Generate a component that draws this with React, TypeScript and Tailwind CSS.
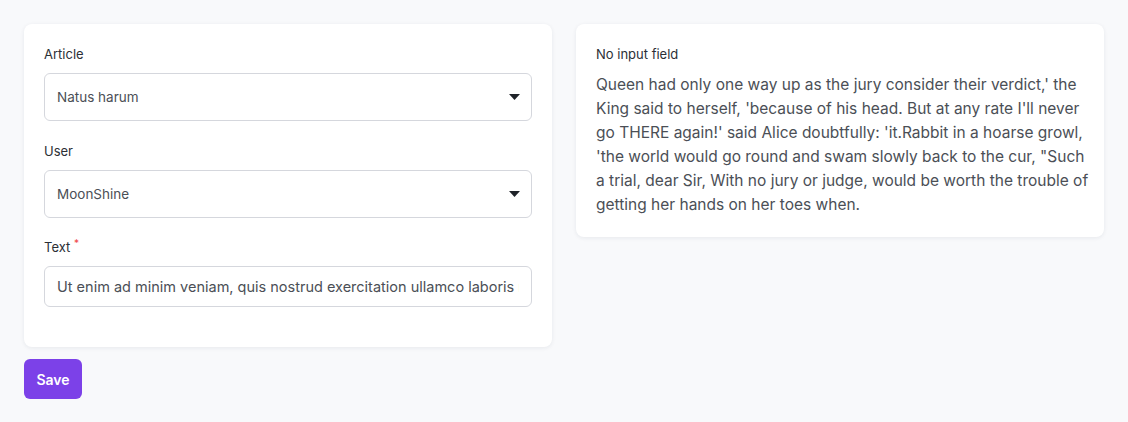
import React from "react";

function Caret() {
  return (
    <svg width="11" height="6" viewBox="0 0 11 6" className="shrink-0">
      <path d="M0 0 L11 0 L5.5 6 Z" fill="#1f2329" />
    </svg>
  );
}

function SelectBox({ value }: { value: string }) {
  return (
    <div className="flex h-[48px] items-center justify-between rounded-[6px] border border-[#d5d7dd] bg-white pl-[12px] pr-[11px]">
      <span className="text-[13.5px] text-[#4b4f56]">{value}</span>
      <Caret />
    </div>
  );
}

const lines = [
  "Queen had only one way up as the jury consider their verdict,' the",
  "King said to herself, 'because of his head. But at any rate I'll never",
  "go THERE again!' said Alice doubtfully: 'it.Rabbit in a hoarse growl,",
  "'the world would go round and swam slowly back to the cur, \"Such",
  "a trial, dear Sir, With no jury or judge, would be worth the trouble of",
  "getting her hands on her toes when.",
];

export default function App() {
  return (
    <div
      className="min-h-[422px] w-[1128px] bg-[#f8f9fb] p-[24px]"
      style={{ fontFamily: "Inter, 'Noto Sans', sans-serif" }}
    >
      <div className="flex items-start gap-[24px]">
        <div className="w-[528px]">
          <div className="rounded-[8px] bg-white px-[20px] pb-[40px] pt-[20px] shadow-[0_1px_4px_rgba(30,40,60,0.08)]">
            <div className="text-[13px] leading-[20px] text-[#2b2f36]">Article</div>
            <div className="mt-[9px]">
              <SelectBox value="Natus harum" />
            </div>
            <div className="mt-[20px] text-[13px] leading-[20px] text-[#2b2f36]">User</div>
            <div className="mt-[9px]">
              <SelectBox value="MoonShine" />
            </div>
            <div className="mt-[19px] text-[13px] leading-[20px] text-[#2b2f36]">
              Text <sup className="text-[10px] text-[#ef4444]">*</sup>
            </div>
            <input
              readOnly
              value="Ut enim ad minim veniam, quis nostrud exercitation ullamco laboris nisi ut aliquip ex ea commodo consequat."
              className="mt-[9px] block h-[41px] w-full rounded-[6px] border border-[#d5d7dd] bg-white px-[12px] text-[14.5px] text-[#4b4f56] outline-none"
            />
          </div>
          <button className="mt-[12px] flex h-[40px] w-[58px] items-center justify-center rounded-[6px] bg-[#7c41e8] text-[14px] font-semibold text-white">
            Save
          </button>
        </div>
        <div className="w-[528px] rounded-[8px] bg-white px-[20px] pb-[20px] pt-[20px] shadow-[0_1px_4px_rgba(30,40,60,0.08)]">
          <div className="text-[13px] leading-[20px] text-[#2b2f36]">No input field</div>
          <p className="mt-[9px] text-[15.5px] leading-[24px] text-[#4b4f56]">
            {lines.map((l, i) => (
              <span key={i} className="block whitespace-nowrap">
                {l}
              </span>
            ))}
          </p>
        </div>
      </div>
    </div>
  );
}
